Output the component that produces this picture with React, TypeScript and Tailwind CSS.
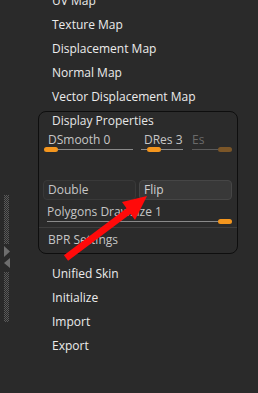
import React from 'react';

const font = { fontFamily: '"Open Sans", "Noto Sans", sans-serif' };

const menuTop = ['UV Map', 'Texture Map', 'Displacement Map', 'Normal Map', 'Vector Displacement Map'];
const menuBottom = ['Unified Skin', 'Initialize', 'Import', 'Export'];

// checkered grip used by the left scroll strip
const Grip: React.FC<{ h: string }> = ({ h }) => (
  <svg className={`${h} w-[5px] block`}>
    <defs>
      <pattern id="chk" width="2" height="2" patternUnits="userSpaceOnUse">
        <rect width="2" height="2" fill="#2a2a2a" />
        <rect width="1" height="1" fill="#5a5a5a" />
        <rect x="1" y="1" width="1" height="1" fill="#5a5a5a" />
      </pattern>
    </defs>
    <rect width="100%" height="100%" fill="url(#chk)" />
  </svg>
);

const Thumb: React.FC<{ dim?: boolean }> = ({ dim }) => (
  <div className={`h-[5px] w-[14px] rounded-full ${dim ? 'bg-[#7b5628]' : 'bg-[#f4961e]'}`} />
);

const Line: React.FC<{ w: string; dim?: boolean }> = ({ w, dim }) => (
  <div className={`${w} h-px ${dim ? 'bg-[#5a5a5a]' : 'bg-[#8a8a8a]'}`} />
);

const MenuItem: React.FC<{ label: string }> = ({ label }) => (
  <div className="h-6 flex items-center pl-[14px] text-[12px] text-[#ececec]">{label}</div>
);

export default function App() {
  return (
    <div className="relative w-[258px] h-[393px] overflow-hidden bg-[#2a2a2a] flex" style={font}>
      {/* left scroll strip */}
      <div className="w-[38px] shrink-0 flex flex-col pl-[4px] pt-[195px]">
        <Grip h="h-[49px]" />
        <svg className="mt-[2px] w-[6px] h-[22px] block" viewBox="0 0 6 22">
          <polygon points="0,0 6,5.5 0,11" fill="#6e6e6e" />
          <polygon points="6,12 0,17 6,22" fill="#6e6e6e" />
        </svg>
        <Grip h="mt-[4px] h-[50px]" />
      </div>

      {/* main column */}
      <div className="flex-1 flex flex-col -mt-[11px]">
        {menuTop.map((m) => (
          <MenuItem key={m} label={m} />
        ))}

        <div className="mt-[2px] w-[200px] h-[143px] rounded-[8px] border border-[#0e0e0e] bg-[#2b2b2b] flex flex-col">
          <div className="h-[18px] flex items-center pl-[13px] text-[12px] text-[#e6e6e6]">Display Properties</div>

          <div className="mt-[2px] flex pl-[5px] text-[12px]">
            <div className="w-[89px] flex flex-col">
              <div className="h-4 leading-4 pl-[4px] text-[#c6c6c6]">DSmooth 0</div>
              <div className="-mt-px h-[5px] flex items-center">
                <Thumb />
                <Line w="w-[75px]" />
              </div>
            </div>
            <div className="ml-[8px] w-[42px] flex flex-col">
              <div className="h-4 leading-4 pl-[3px] text-[#c6c6c6]">DRes 3</div>
              <div className="-mt-px h-[5px] flex items-center">
                <Line w="w-[6px]" />
                <Thumb />
                <Line w="w-[22px]" />
              </div>
            </div>
            <div className="ml-[9px] w-[40px] flex flex-col">
              <div className="h-4 leading-4 text-[#6a6a6a]">Es</div>
              <div className="-mt-px h-[5px] flex items-center">
                <Line w="w-[26px]" dim />
                <Thumb dim />
              </div>
            </div>
          </div>

          <div className="mt-[28px] ml-[4px] flex gap-[3px] text-[12px]">
            <div className="w-[93px] h-[20px] rounded-[4px] border border-[#393939] bg-[#2e2e2e] flex items-center pl-[4px] text-[#c6c6c6]">
              Double
            </div>
            <div className="w-[93px] h-[20px] rounded-[4px] border border-[#464646] bg-[#383838] flex items-center pl-[4px] text-[#d0d0d0]">
              Flip
            </div>
          </div>

          <div className="mt-[4px] h-4 leading-4 pl-[8px] text-[12px] text-[#c6c6c6]">Polygons DrawSize 1</div>
          <div className="-mt-px ml-[8px] h-[5px] flex items-center">
            <Line w="w-[171px]" />
            <Thumb />
          </div>

          <div className="mt-[3px] h-px bg-[#3e3e3e]" />
          <div className="mt-[4px] h-4 leading-4 pl-[9px] text-[12px] text-[#c6c6c6]">BPR Settings</div>
        </div>

        <div className="mt-[8px] flex flex-col">
          {menuBottom.map((m) => (
            <MenuItem key={m} label={m} />
          ))}
        </div>
      </div>

      {/* red annotation arrow */}
      <svg className="absolute inset-0 pointer-events-none" width="258" height="393">
        <line x1="66" y1="258" x2="130" y2="210" stroke="#ff0a0a" strokeWidth="7" />
        <polygon points="147,196 122,202 135,220" fill="#ff0a0a" />
      </svg>
    </div>
  );
}
